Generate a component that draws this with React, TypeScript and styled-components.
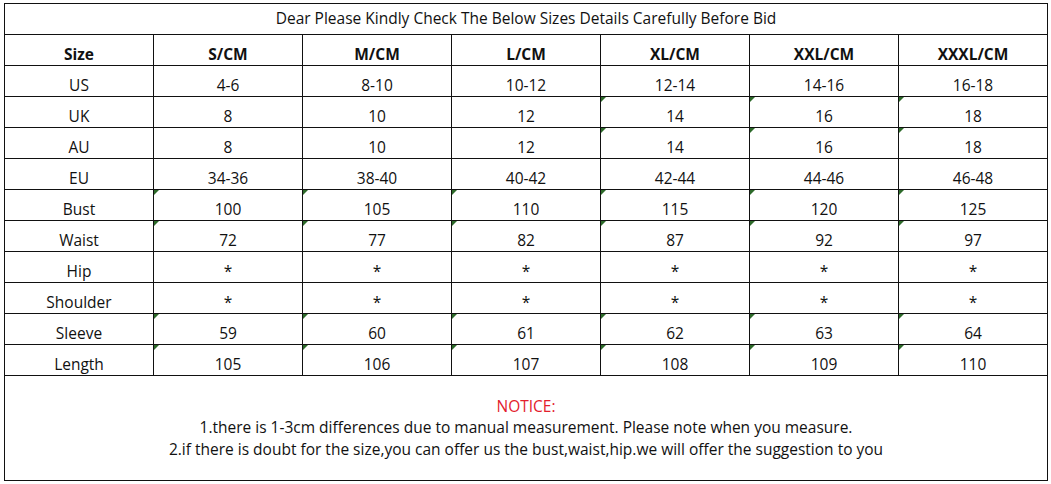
import React from 'react';
import styled, { createGlobalStyle, css } from 'styled-components';

const GlobalStyle = createGlobalStyle`
  html, body {
    margin: 0;
    padding: 0;
    background: #ffffff;
  }
  body {
    font-family: 'Open Sans', 'Noto Sans', sans-serif;
    color: #111;
  }
`;

const Page = styled.div`
  width: 1051px;
  height: 484px;
  box-sizing: border-box;
  padding: 3px 0 0 4px;
  background: #fff;
`;

const Sheet = styled.div`
  width: 1044px;
  box-sizing: border-box;
  border-left: 1px solid #111;
  border-top: 1px solid #111;
  display: flex;
  flex-direction: column;
`;

const Title = styled.div`
  height: 31px;
  box-sizing: border-box;
  border-right: 1px solid #111;
  border-bottom: 1px solid #111;
  display: flex;
  align-items: center;
  justify-content: center;
  font-size: 15.5px;
  padding-bottom: 2px;
`;

const Grid = styled.div`
  display: grid;
  grid-template-columns: repeat(7, 149px);
  grid-auto-rows: 31px;
`;

const Cell = styled.div<{ $head?: boolean; $flag?: boolean }>`
  position: relative;
  box-sizing: border-box;
  border-right: 1px solid #111;
  border-bottom: 1px solid #111;
  display: flex;
  align-items: flex-end;
  justify-content: center;
  font-size: 15.5px;
  line-height: 22px;
  ${({ $head }) =>
    $head &&
    css`
      font-weight: 700;
    `}
  ${({ $flag }) =>
    $flag &&
    css`
      &::before {
        content: '';
        position: absolute;
        top: 0;
        left: 0;
        border-top: 5px solid #2d6a2a;
        border-right: 5px solid transparent;
      }
    `}
`;

const Notice = styled.div`
  height: 105px;
  box-sizing: border-box;
  border-right: 1px solid #111;
  border-bottom: 1px solid #111;
  display: flex;
  flex-direction: column;
  align-items: center;
  justify-content: center;
  font-size: 15.5px;
  line-height: 21.5px;
`;

const NoticeHead = styled.span`
  color: #e3202c;
`;

const sizes = ['S/CM', 'M/CM', 'L/CM', 'XL/CM', 'XXL/CM', 'XXXL/CM'];

type Row = { label: string; values: string[]; flags: number[] };

const all = [0, 1, 2, 3, 4, 5];

const rows: Row[] = [
  { label: 'US', values: ['4-6', '8-10', '10-12', '12-14', '14-16', '16-18'], flags: [] },
  { label: 'UK', values: ['8', '10', '12', '14', '16', '18'], flags: [3, 4, 5] },
  { label: 'AU', values: ['8', '10', '12', '14', '16', '18'], flags: [3, 4, 5] },
  { label: 'EU', values: ['34-36', '38-40', '40-42', '42-44', '44-46', '46-48'], flags: [] },
  { label: 'Bust', values: ['100', '105', '110', '115', '120', '125'], flags: all },
  { label: 'Waist', values: ['72', '77', '82', '87', '92', '97'], flags: all },
  { label: 'Hip', values: ['*', '*', '*', '*', '*', '*'], flags: [] },
  { label: 'Shoulder', values: ['*', '*', '*', '*', '*', '*'], flags: [] },
  { label: 'Sleeve', values: ['59', '60', '61', '62', '63', '64'], flags: all },
  { label: 'Length', values: ['105', '106', '107', '108', '109', '110'], flags: all },
];

export default function App() {
  return (
    <>
      <GlobalStyle />
      <Page>
        <Sheet>
          <Title>Dear Please Kindly Check The Below Sizes Details Carefully Before Bid</Title>
          <Grid>
            <Cell $head>Size</Cell>
            {sizes.map((s) => (
              <Cell key={s} $head>
                {s}
              </Cell>
            ))}
            {rows.map((r) => (
              <React.Fragment key={r.label}>
                <Cell>{r.label}</Cell>
                {r.values.map((v, i) => (
                  <Cell key={i} $flag={r.flags.includes(i)}>
                    {v}
                  </Cell>
                ))}
              </React.Fragment>
            ))}
          </Grid>
          <Notice>
            <NoticeHead>NOTICE:</NoticeHead>
            <span>1.there is 1-3cm differences due to manual measurement. Please note when you measure.</span>
            <span>2.if there is doubt for the size,you can offer us the bust,waist,hip.we will offer the suggestion to you</span>
          </Notice>
        </Sheet>
      </Page>
    </>
  );
}
